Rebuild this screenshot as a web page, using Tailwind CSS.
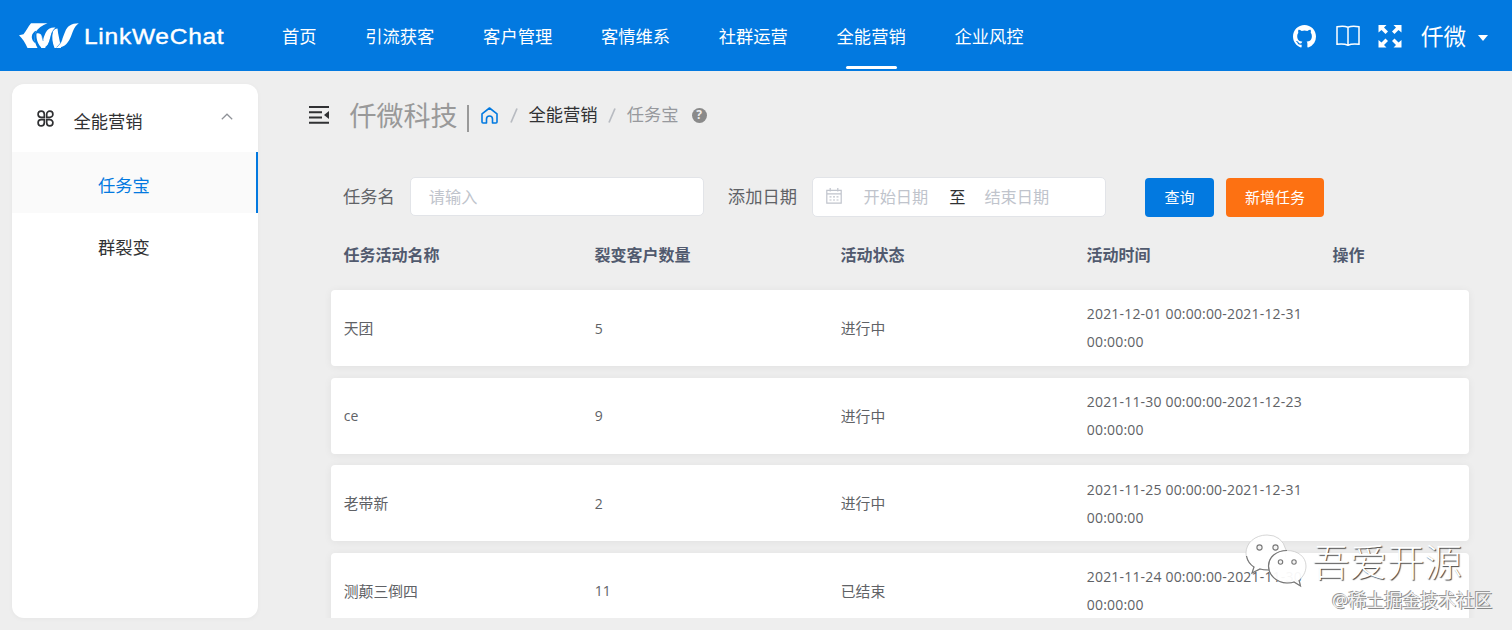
<!DOCTYPE html>
<html lang="zh-CN">
<head>
<meta charset="utf-8">
<title>LinkWeChat</title>
<script src="https://cdn.jsdelivr.net/npm/@tailwindcss/browser@4"></script>
</head>
<body class="relative h-[630px] w-[1512px] overflow-hidden bg-[#eeeeee] font-['Open_Sans','Noto_Sans_CJK_SC',sans-serif] text-[#606266]">
<header class="flex h-[71px] items-center bg-[#0279e0] pl-[18px] pr-6 text-white">
  <svg class="h-[26px] w-[62px] shrink-0" viewBox="0 0 62 26" fill="#fff">
    <path d="M13 .3H29.500C24 2.500 20 5 17.500 9.500 15.500 13 16 18 19.500 25H9.500C7.500 20 4.500 16 1 12.300L5.500 11.300C8 8 10 4 13 .3Z"/>
    <path fill="#0279e0" d="M16.500 8.500C12.500 12 13 17 17.500 20.500 16 16 16 12 18.500 7.500Z"/>
    <path d="M18.500 10.500C22.500 9.500 24 12 24.500 15L27.500 25H24C20 22 18 16 18.500 10.500Z"/>
    <path d="M23 25C24.500 20 25 15 27.500 10 29.500 6 33 4.200 37.500 4.600 33 8 33 14 31 19 29.500 23 27 25 23 25Z"/>
    <path d="M35 8.500C36 6.500 37.500 5.500 39.500 5.500 40 12 42 18 43 25H36.500C34.500 20 33.500 14 35 8.500Z"/>
    <path d="M37.500 25C43 22 44.500 15 47 9 49.500 3 53 .5 60.800.3 55.500 4 55 9 52.500 14.500 49.500 21.500 45 25 37.500 25Z"/>
    <path fill="none" stroke="#0279e0" stroke-width=".6" d="M28.500 24.500C31.500 21 32.500 15 34 9.500M24 11.500C24 15 25 17 25.200 18M38.500 24.300C41.500 22 43 19.500 44 16.500"/>
  </svg>
  <span class="ml-[4px] w-[141px] shrink-0"><span class="inline-block origin-left translate-y-px scale-x-[1.115] whitespace-nowrap font-['Liberation_Sans',sans-serif] text-[22px] leading-8 tracking-[0.65px] [-webkit-text-stroke:0.4px_white]">LinkWeChat</span></span>
  <nav class="ml-[57px] flex h-full items-center gap-[48.7px] whitespace-nowrap pt-0.5 text-[17.3px]">
    <span>首页</span><span>引流获客</span><span>客户管理</span><span>客情维系</span><span>社群运营</span>
    <span class="relative">全能营销<i class="absolute -bottom-[20px] left-[9px] h-[3px] w-[51px] rounded-full bg-white"></i></span>
    <span>企业风控</span>
  </nav>
  <div class="ml-auto flex items-center pt-px">
    <svg class="h-[23px] w-[23px]" viewBox="0 0 16 16" fill="#fff"><path d="M8 0C3.58 0 0 3.58 0 8c0 3.54 2.29 6.53 5.47 7.59.4.07.55-.17.55-.38 0-.19-.01-.82-.01-1.49-2.01.37-2.53-.49-2.69-.94-.09-.23-.48-.94-.82-1.13-.28-.15-.68-.52-.01-.53.63-.01 1.08.58 1.23.82.72 1.21 1.87.87 2.33.66.07-.52.28-.87.51-1.07-1.78-.2-3.64-.89-3.64-3.95 0-.87.31-1.59.82-2.15-.08-.2-.36-1.02.08-2.12 0 0 .67-.21 2.2.82a7.6 7.6 0 0 1 4 0c1.53-1.04 2.2-.82 2.2-.82.44 1.1.16 1.92.08 2.12.51.56.82 1.27.82 2.15 0 3.07-1.87 3.75-3.65 3.95.29.25.54.73.54 1.48 0 1.07-.01 1.93-.01 2.200 0 .21.15.46.55.38A8.01 8.01 0 0 0 16 8c0-4.42-3.58-8-8-8Z"/></svg>
    <svg class="mb-px ml-5 h-[22px] w-6" viewBox="0 0 24 22" fill="none" stroke="#fff" stroke-width="1.500"><path d="M1 1.800C5 .9 9 1 12 2.200c3-1.200 7-1.300 11-.4v17.400c-4-.5-8-.4-11 1-3-1.400-7-1.500-11-1ZM12 2.200v18"/></svg>
    <svg class="ml-[18px] h-6 w-6" viewBox="0 0 24 24" fill="#fff"><path d="M.5 1h8L6 3.500l4 4L7.500 10l-4-4-3 2.500ZM23.500 1h-8L18 3.500l-4 4L16.500 10l4-4 3 2.500ZM.5 23.500h8L6 21l4-4-2.500-2.500-4 4-3-2.500ZM23.500 23.500h-8L18 21l-4-4 2.500-2.500 4 4 3-2.500Z"/></svg>
    <span class="ml-[19px] mt-px text-[22.500px] leading-8">仟微</span>
    <i class="ml-3 mt-1 border-x-[5px] border-t-[6px] border-x-transparent border-t-white"></i>
  </div>
</header>

<div class="flex pl-3 pt-[13px]">
  <aside class="h-[534px] w-[246px] shrink-0 overflow-hidden rounded-xl bg-white text-[17.3px] text-[#303133] shadow-[0_1px_5px_rgba(0,0,0,0.04)]">
    <div class="flex h-[68px] items-center pl-[25px] pr-[25px] pt-1">
      <svg class="mb-1 h-[17px] w-[17px]" viewBox="0 0 17 17" fill="none" stroke="#303133" stroke-width="1.700"><path d="M7.300 7.300H4.200A3.100 3.100 0 1 1 7.300 4.200ZM9.700 7.300V4.200a3.100 3.100 0 1 1 3.100 3.100ZM7.300 9.700v3.100a3.100 3.100 0 1 1-3.100-3.100ZM9.700 9.700h3.100a3.100 3.100 0 1 1-3.100 3.100Z"/></svg>
      <span class="ml-[19.500px] mt-1">全能营销</span>
      <svg class="mb-2 ml-auto h-[7px] w-3" viewBox="0 0 12 7" fill="none" stroke="#909399" stroke-width="1.200"><path d="m.8 6.200 5.200-5 5.200 5"/></svg>
    </div>
    <div class="flex h-[61px] items-center border-r-2 border-[#0279e0] bg-[#fafafa] pl-[86px] pt-1.5 text-[#0279e0]">任务宝</div>
    <div class="flex h-[62px] items-center pl-[86px] pt-2">群裂变</div>
  </aside>

  <main class="ml-[51px] h-[534px] w-[1170px] overflow-hidden">
    <div class="flex h-[62px] items-center whitespace-nowrap text-[17.3px]">
      <svg class="h-[18px] w-5" viewBox="0 0 20 18" fill="#303133"><path d="M0 0h20v2H0zM0 5.300h13v2H0zM0 10.500h13v2H0zM0 15.800h20v2H0zM20 5v8l-5-4z"/></svg>
      <span class="ml-[20.500px] mt-0.5 text-[27px] leading-[36px] text-[#999999]">仟微科技</span>
      <i class="ml-[9.500px] mt-1.5 h-[27px] w-[2px] bg-[#999999]"></i>
      <svg class="ml-3 h-[17px] w-[17px]" viewBox="0 0 17 17" fill="none" stroke="#0279e0" stroke-width="1.600" stroke-linejoin="round"><path d="M1 6.800 8.500 1 16 6.800V15q0 1-1 1h-3.500v-4a3 3 0 0 0-6 0v4H2q-1 0-1-1Z"/></svg>
      <svg class="ml-3 h-[15px] w-2" viewBox="0 0 8 15" stroke="#b8bbc1" stroke-width="1.700"><path d="M7 .5 1 14.500"/></svg>
      <span class="ml-[10.500px] text-[#303133]">全能营销</span>
      <svg class="ml-[10px] h-[15px] w-2" viewBox="0 0 8 15" stroke="#b8bbc1" stroke-width="1.700"><path d="M7 .5 1 14.500"/></svg>
      <span class="ml-[11px] text-[#97999d]">任务宝</span>
      <span class="ml-[13px] flex h-[15px] w-[15px] items-center justify-center rounded-full bg-[#8a8a8a] text-[12px] font-bold leading-none text-[#eeeeee]">?</span>
    </div>

    <div class="mt-[31px] flex h-10 items-center whitespace-nowrap pl-[35px] text-[17.3px]">
      <span class="-ml-px">任务名</span>
      <div class="-mt-px ml-[15px] flex h-[39px] w-[294px] items-center rounded-[5px] border border-[#e2e4e8] bg-white pl-[18px] pt-px text-[16.200px] text-[#c0c4cc]">请输入</div>
      <span class="ml-6">添加日期</span>
      <div class="ml-[15px] flex h-10 w-[294px] items-center rounded-[5px] border border-[#e2e4e8] bg-white pl-[12.500px] text-[16.200px] text-[#c0c4cc]">
        <svg class="mb-0.5 h-4 w-4" viewBox="0 0 16 16" fill="none" stroke="#c0c4cc" stroke-width="1.200"><path d="M.8 2.300h14.400v12.900H.8ZM.8 5.800h14.400M4.200 0v3.500M11.800 0v3.500M3.500 8.800h2M7 8.800h2M10.500 8.800h2M3.500 12h2M7 12h2M10.500 12h2"/></svg>
        <span class="ml-[22px] mt-px">开始日期</span><span class="ml-[21px] mt-px text-[#303133]">至</span><span class="ml-[19px] mt-px">结束日期</span>
      </div>
      <div class="ml-[39px] flex h-[39px] w-[69px] items-center justify-center rounded bg-[#0279e0] text-[15px] text-white">查询</div>
      <div class="ml-3 flex h-[39px] w-[98px] items-center justify-center rounded bg-[#fd7112] text-[15px] text-white">新增任务</div>
    </div>

    <div class="ml-[22px] grid h-[73px] w-[1138px] grid-cols-[251px_246px_246px_246px_1fr] text-[16px] font-bold leading-[76px] text-[#515a6e] *:pl-[12.500px]">
      <span>任务活动名称</span><span>裂变客户数量</span><span>活动状态</span><span>活动时间</span><span>操作</span>
    </div>
    <div class="ml-[22px] flex w-[1138px] flex-col gap-[11.500px] text-[14.800px] leading-7">
      <div class="grid h-[76px] shrink-0 grid-cols-[251px_246px_246px_246px_1fr] items-center rounded bg-white shadow-[0_1px_8px_rgba(0,0,0,0.06)] *:pl-[12.800px]"><span>天团</span><span class="pt-px text-[14px]">5</span><span>进行中</span><span class="whitespace-nowrap text-[14px] tracking-[0.18px]">2021-12-01 00:00:00-2021-12-31<br>00:00:00</span></div>
      <div class="grid h-[76px] shrink-0 grid-cols-[251px_246px_246px_246px_1fr] items-center rounded bg-white shadow-[0_1px_8px_rgba(0,0,0,0.06)] *:pl-[12.800px]"><span class="text-[14px]">ce</span><span class="text-[14px]">9</span><span>进行中</span><span class="whitespace-nowrap text-[14px] tracking-[0.18px]">2021-11-30 00:00:00-2021-12-23<br>00:00:00</span></div>
      <div class="grid h-[76px] shrink-0 grid-cols-[251px_246px_246px_246px_1fr] items-center rounded bg-white shadow-[0_1px_8px_rgba(0,0,0,0.06)] *:pl-[12.800px]"><span>老带新</span><span class="pt-px text-[14px]">2</span><span>进行中</span><span class="whitespace-nowrap pt-px text-[14px] tracking-[0.18px]">2021-11-25 00:00:00-2021-12-31<br>00:00:00</span></div>
      <div class="grid h-[76px] shrink-0 grid-cols-[251px_246px_246px_246px_1fr] items-center rounded bg-white shadow-[0_1px_8px_rgba(0,0,0,0.06)] *:pl-[12.800px]"><span>测颠三倒四</span><span class="text-[14px]">11</span><span>已结束</span><span class="whitespace-nowrap text-[14px] tracking-[0.18px]">2021-11-24 00:00:00-2021-11-30<br>00:00:00</span></div>
    </div>
  </main>
</div>

<div class="absolute left-[1245px] top-[533px]">
  <svg class="h-[56px] w-[64px]" viewBox="0 0 64 56">
    <path fill="#fff" fill-opacity=".92" stroke="#c4c4c4" stroke-width=".7" d="M22 2C10 2 1 10 1 20c0 6 3 11 8 14l-2 6 8-4c3 1 6 1 9 1Q42 34 41 17 37 2 22 2Z"/>
    <path fill="none" stroke="#777" stroke-width="1.200" d="M1.500 23c1 5 3.500 8.500 7.500 11l-2 6 8-4c3 1 6 1 9 1"/>
    <path fill="#fff" fill-opacity=".95" stroke="#c4c4c4" stroke-width=".7" d="M42 17.500c-11 0-18.500 7-18.500 15.500s7.500 17 18.500 17c3 0 5 0 7-1l6.500 4-1.500-6c4-3 7-8 7-14 0-9-8-15.500-19-15.500Z"/>
    <path fill="none" stroke="#777" stroke-width="1.200" d="M42 17.500c-11 0-18.500 7-18.500 15.500s7.500 17 18.500 17c3 0 5 0 7-1l6.500 4-1.500-6"/>
    <g fill="#f4f4f4" stroke="#777" stroke-width="1.100"><circle cx="14.500" cy="14.500" r="2.600"/><circle cx="30.500" cy="14.500" r="2.600"/><circle cx="35.500" cy="29" r="2.200"/><circle cx="49" cy="29" r="2.200"/></g>
  </svg>
</div>
<div class="absolute left-[1312px] top-[539px] whitespace-nowrap text-[37.500px] font-light leading-[46px] text-white [text-shadow:1px_1px_1px_#444]">吾爱开源</div>
<div class="absolute left-[1332px] top-[588px] whitespace-nowrap text-[18px] leading-6 text-[#f4f4f4] [text-shadow:-1px_-1px_0_#999,1px_1px_0_#888]">@稀土掘金技术社区</div>
</body>
</html>
